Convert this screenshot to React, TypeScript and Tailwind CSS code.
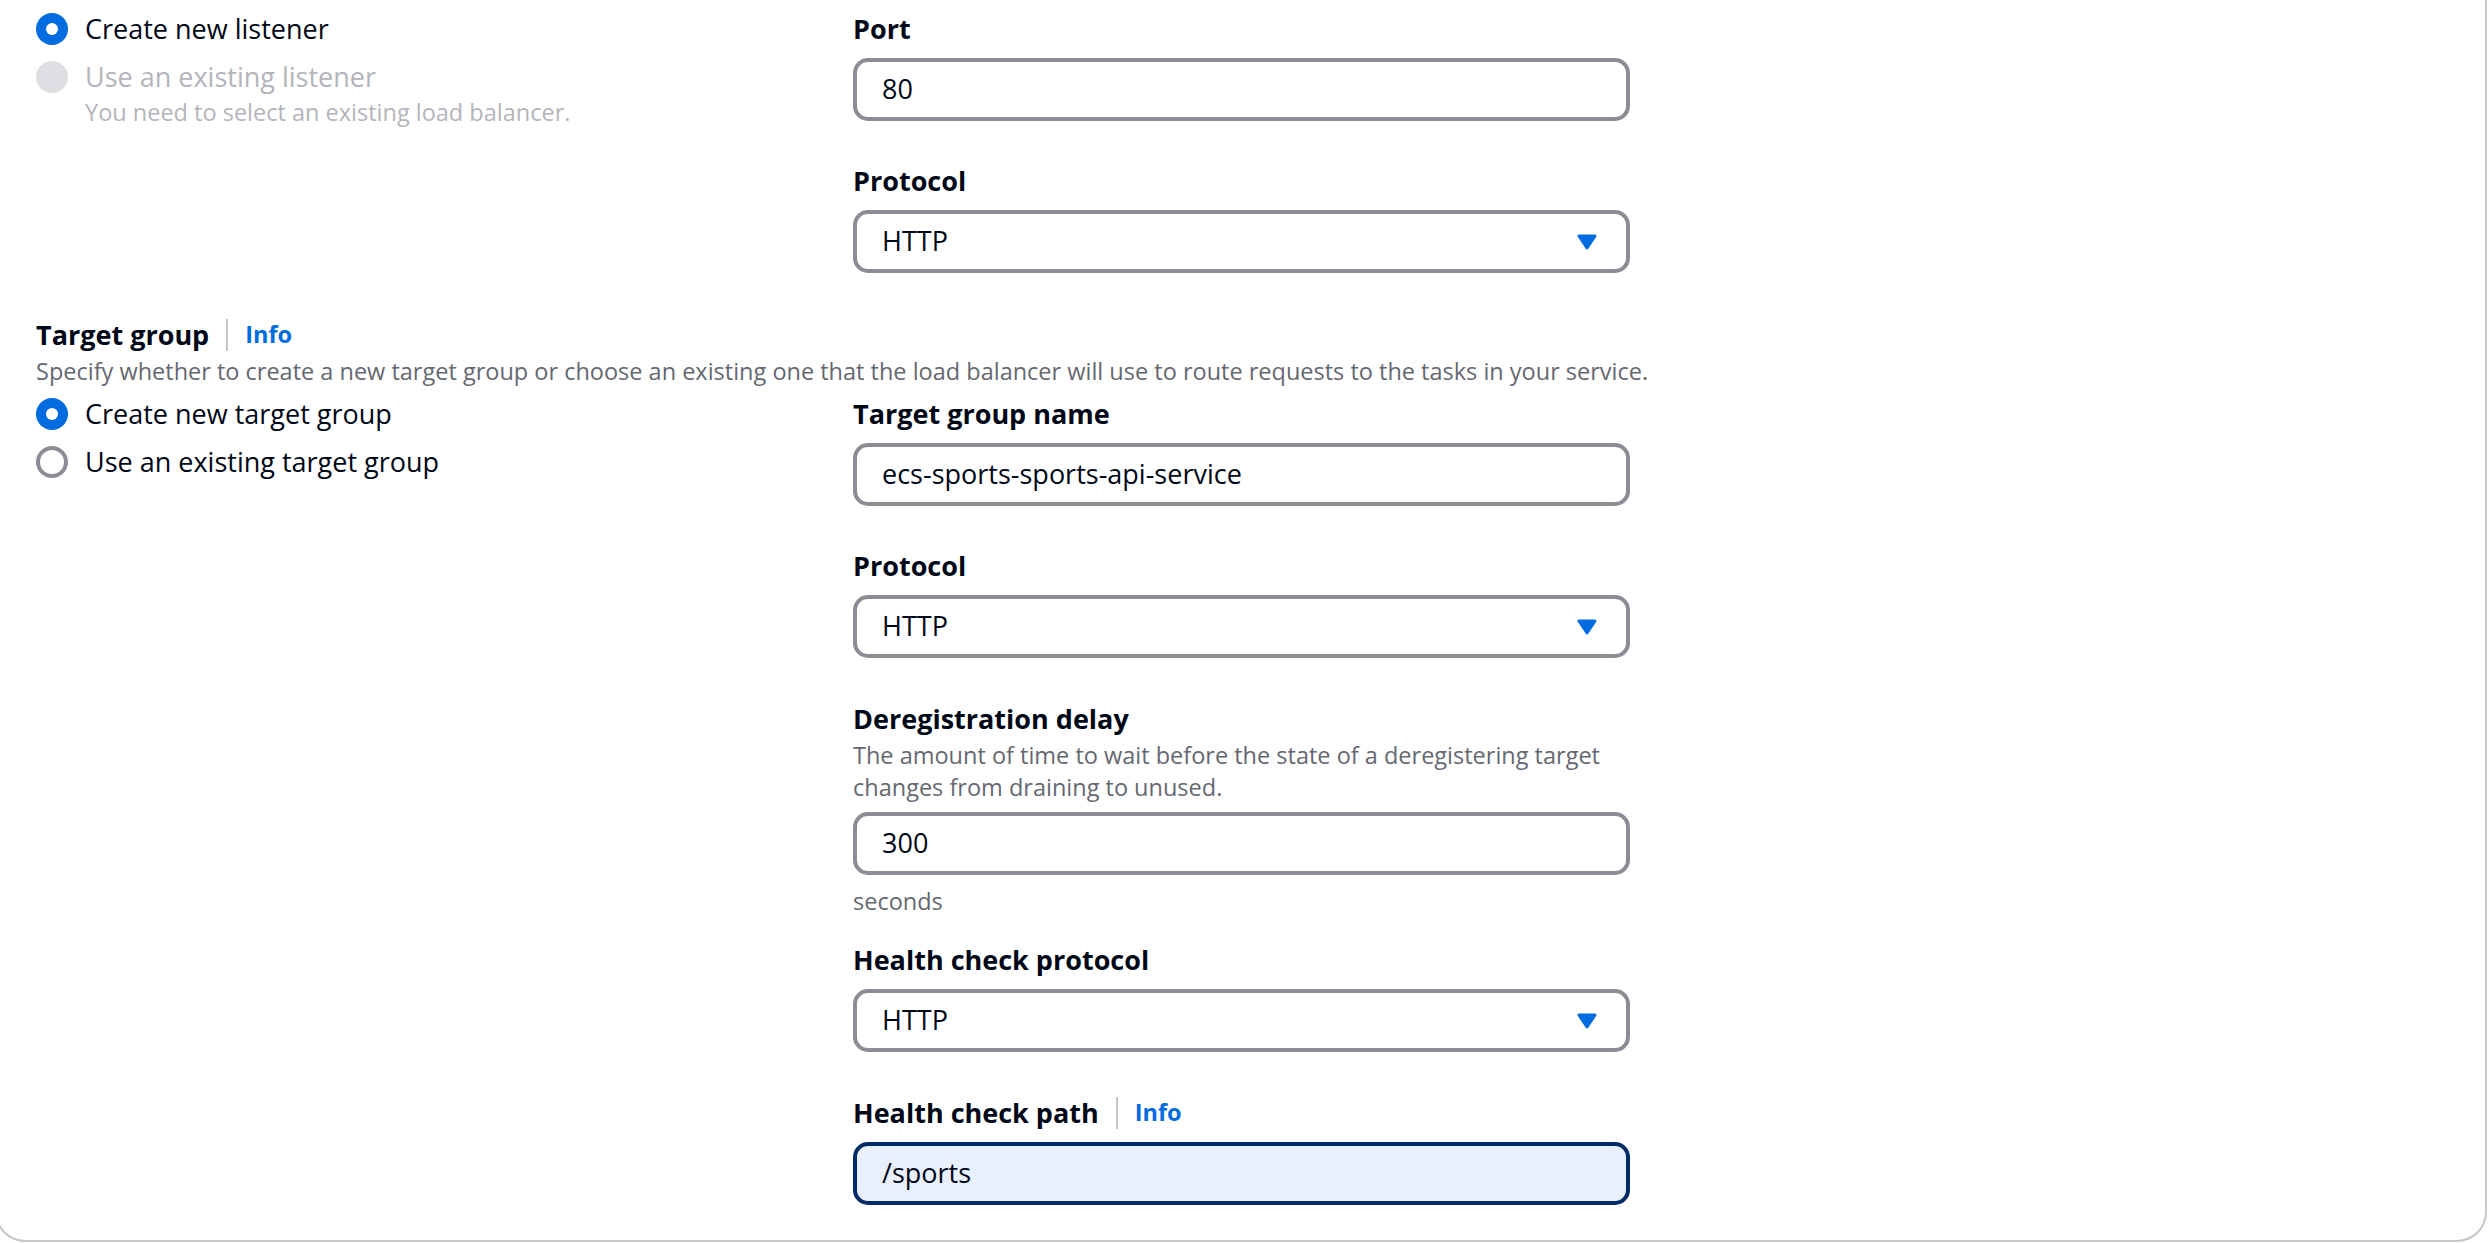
import React from "react"

function Radio({ checked, disabled }: { checked?: boolean; disabled?: boolean }) {
  if (disabled) {
    return <span className="w-[32px] h-[32px] rounded-full bg-[#dedee3] shrink-0" />
  }
  if (checked) {
    return (
      <span className="w-[32px] h-[32px] rounded-full bg-[#006ce0] flex items-center justify-center shrink-0">
        <span className="w-[12px] h-[12px] rounded-full bg-white" />
      </span>
    )
  }
  return <span className="w-[32px] h-[32px] rounded-full border-[4px] border-[#8c8c94] bg-white shrink-0" />
}

function RadioRow({ label, checked, disabled }: { label: string; checked?: boolean; disabled?: boolean }) {
  return (
    <div className="flex items-center h-[40px] gap-[17px]">
      <Radio checked={checked} disabled={disabled} />
      <span className={`text-[27px] leading-[40px] ${disabled ? "text-[#b4b4bb]" : "text-[#000716]"}`}>{label}</span>
    </div>
  )
}

function Label({ children, info }: { children: React.ReactNode; info?: boolean }) {
  return (
    <div className="flex items-center h-[40px]">
      <span className="text-[27px] leading-[40px] font-bold text-[#000716]">{children}</span>
      {info && (
        <>
          <span className="ml-[17px] w-[2px] h-[32px] bg-[#c6c6cd]" />
          <span className="ml-[17px] text-[23.5px] font-bold text-[#006ce0]">Info</span>
        </>
      )}
    </div>
  )
}

function TextInput({ value, focused }: { value: string; focused?: boolean }) {
  return (
    <div
      className={`mt-[9px] h-[63px] rounded-[15px] border-[4px] pl-[25px] flex items-center text-[27px] text-[#000716] ${
        focused ? "border-[#002b66] bg-[#e8f0fe]" : "border-[#8c8c94] bg-white"
      }`}
    >
      {value}
    </div>
  )
}

function Select({ value }: { value: string }) {
  return (
    <div className="mt-[9px] h-[63px] rounded-[15px] border-[4px] border-[#8c8c94] bg-white pl-[25px] pr-[29px] flex items-center justify-between text-[27px] text-[#000716]">
      <span>{value}</span>
      <svg width="20" height="16" viewBox="0 0 20 16">
        <polygon points="2,2 18,2 10,14" fill="#006ce0" stroke="#006ce0" strokeWidth="3" strokeLinejoin="round" />
      </svg>
    </div>
  )
}

export default function App() {
  return (
    <div className="w-[2492px] h-[1243px] bg-white overflow-hidden font-['Open_Sans',sans-serif] text-[#000716]">
      <div className="h-[1242px] ml-[-5px] mr-[5px] border-x-2 border-b-2 border-[#c6c6cd] rounded-b-[30px] pl-[39px] pt-[9px]">
        {/* Listener */}
        <div className="grid grid-cols-[817px_777px]">
          <div className="flex flex-col gap-[8px]">
            <RadioRow label="Create new listener" checked />
            <div>
              <RadioRow label="Use an existing listener" disabled />
              <div className="pl-[49px] text-[23.5px] leading-[30px] text-[#b4b4bb]">
                You need to select an existing load balancer.
              </div>
            </div>
          </div>
          <div className="flex flex-col">
            <Label>Port</Label>
            <TextInput value="80" />
            <div className="mt-[40px]">
              <Label>Protocol</Label>
              <Select value="HTTP" />
            </div>
          </div>
        </div>

        {/* Target group */}
        <div className="mt-[42px]">
          <Label info>Target group</Label>
          <div className="text-[23.5px] leading-[32px] text-[#656871]">
            Specify whether to create a new target group or choose an existing one that the load balancer will use to route requests to the tasks in your service.
          </div>
        </div>

        <div className="grid grid-cols-[817px_777px] mt-[7px]">
          <div className="flex flex-col gap-[8px]">
            <RadioRow label="Create new target group" checked />
            <RadioRow label="Use an existing target group" />
          </div>
          <div className="flex flex-col">
            <Label>Target group name</Label>
            <TextInput value="ecs-sports-sports-api-service" />

            <div className="mt-[40px]">
              <Label>Protocol</Label>
              <Select value="HTTP" />
            </div>

            <div className="mt-[41px]">
              <Label>Deregistration delay</Label>
              <div className="text-[23.5px] leading-[32px] text-[#656871]">
                The amount of time to wait before the state of a deregistering target changes from draining to unused.
              </div>
              <TextInput value="300" />
              <div className="mt-[11px] text-[23.5px] leading-[30px] text-[#656871]">seconds</div>
            </div>

            <div className="mt-[24px]">
              <Label>Health check protocol</Label>
              <Select value="HTTP" />
            </div>

            <div className="mt-[41px]">
              <Label info>Health check path</Label>
              <TextInput value="/sports" focused />
            </div>
          </div>
        </div>
      </div>
    </div>
  )
}
